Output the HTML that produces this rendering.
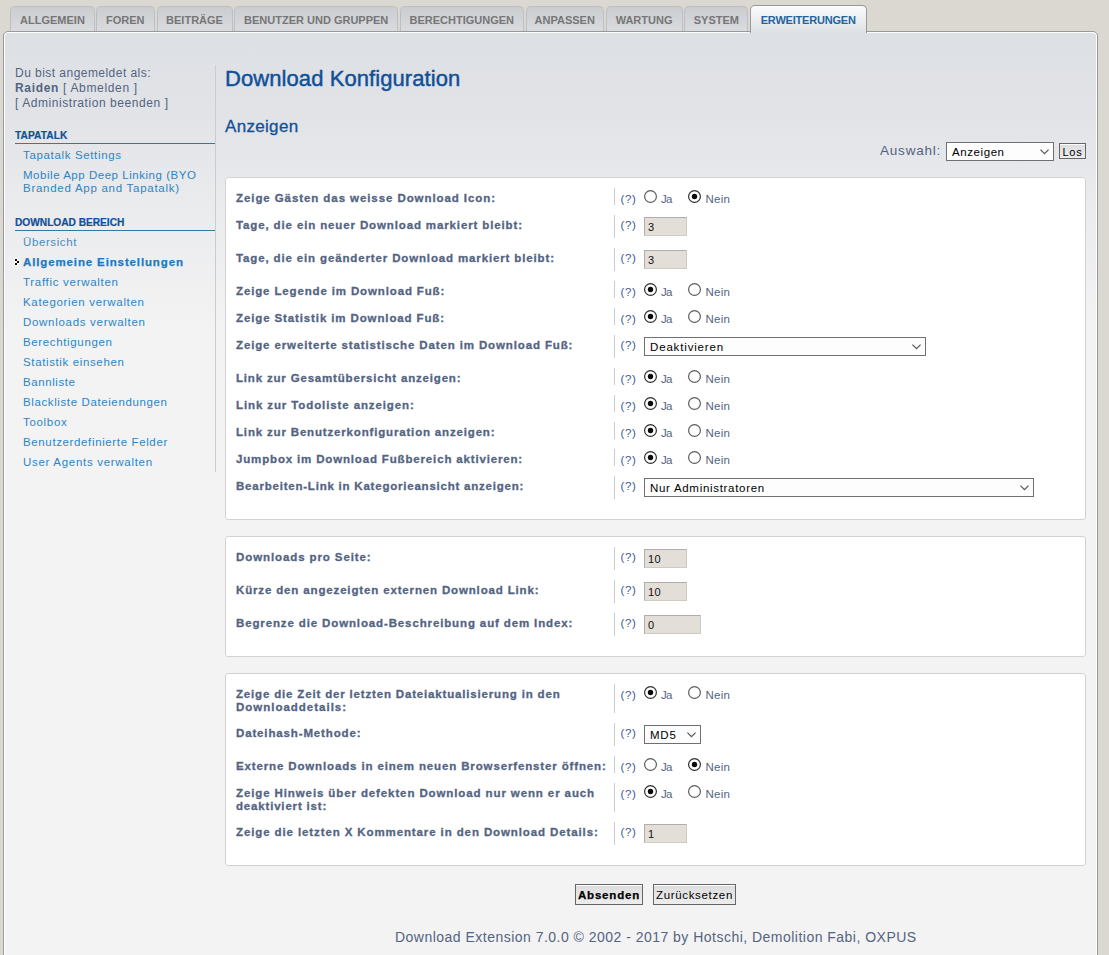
<!DOCTYPE html>
<html lang="de">
<head>
<meta charset="utf-8">
<title>Download Konfiguration</title>
<style>
html,body{margin:0;padding:0;width:1109px;height:955px;overflow:hidden}
#page{position:absolute;left:0;top:0;width:1109px;height:955px;overflow:hidden}
body{width:1109px;height:955px;overflow:hidden;background:#DBD7D1;font-family:"Liberation Sans",sans-serif;color:#536482;position:relative;font-size:12px}
*{box-sizing:border-box}
/* tabs */
#tabs{position:absolute;left:10px;top:0;height:34px;white-space:nowrap}
.tab{position:absolute;top:6px;height:26px;border:1px solid #BEBFC3;border-bottom:none;border-radius:5px 5px 0 0;background:linear-gradient(#CBCCD0,#DADCE0);color:#767676;font-weight:bold;font-size:11px;line-height:13px;padding:7px 0 0 0;text-align:center;text-transform:uppercase;z-index:3}
.tab.act{top:5px;height:28px;border-color:#999999;background:linear-gradient(#FCFCFC,#E9EBED 60%,#DEE1E5);color:#23649F;padding-top:8px;z-index:5;letter-spacing:-.2px}
/* acp */
#acp{position:absolute;left:3px;top:31px;width:1095px;height:960px;border:1px solid #999999;border-radius:5px;background:#fff;padding:1px;z-index:4}
#panel{width:100%;height:100%;border-radius:3px;background:#F3F3F3 linear-gradient(#DDE0E4 0px,#E1E3E7 80px,#EAEBED 170px,#F3F3F3 300px,#F3F3F3 100%)}
.abs{position:absolute;white-space:nowrap}
/* menu */
.mt{font-size:12px;letter-spacing:.4px;line-height:15px;color:#536482}
.mh{font-size:10.2px;font-weight:bold;color:#115098;line-height:12px;-webkit-text-stroke:.2px #115098}
.mline{position:absolute;left:15px;width:200px;height:1px;background:#327AA5}
.mi{position:absolute;left:23px;font-size:11.5px;letter-spacing:.42px;line-height:13px;color:#2E84C4;white-space:nowrap}
.mi.b{font-weight:bold;color:#1E78BE;-webkit-text-stroke:.25px #1E78BE}
.br{padding:0 1px}
h1{position:absolute;left:225px;top:64px;margin:0;font-size:22px;font-weight:normal;color:#115098;-webkit-text-stroke:.45px #115098;line-height:28px;white-space:nowrap}
h2{position:absolute;left:225px;top:116px;margin:0;font-size:17px;font-weight:normal;color:#115098;-webkit-text-stroke:.3px #115098;line-height:22px;letter-spacing:.15px;white-space:nowrap}
fieldset{position:absolute;left:225px;width:861px;margin:0;padding:0;border:1px solid #D2D2D2;border-radius:3px;background:#fff}
.row{position:absolute;left:0;width:100%}
.lbl{position:absolute;left:10px;top:0;font-weight:bold;font-size:11.5px;letter-spacing:.6px;line-height:13px;color:#536482;-webkit-text-stroke:.3px #536482;white-space:nowrap}
.dd{position:absolute;left:388px;top:0;width:1px;background:#CCCCCC}
.q{position:absolute;left:394.5px;font-size:11.5px;letter-spacing:.6px;color:#42568E;line-height:13px}
.radio{position:absolute;overflow:visible}
.rl{position:absolute;font-size:11.5px;line-height:13px;color:#536482}
.inp{position:absolute;left:418px;height:19px;background:#E3DFD8;border:1px solid;border-color:#AFAEAA #CFCBC3 #CFCBC3 #AFAEAA;font-size:11px;color:#111;line-height:19px;padding-left:3px;letter-spacing:.3px}
.sel{position:absolute;left:418px;height:19px;background:#FDFDFD;border:1px solid #707070;font-size:11.5px;color:#000;line-height:19px;padding-left:5px;letter-spacing:.55px;white-space:nowrap}
.sel svg{position:absolute;right:4.2px;top:6px}
.btn{position:absolute;height:21px;background:linear-gradient(#FFFFFF 0px,#FFFFFF 1px,#DEDEDE 1px,#EDEDED 100%);border:1px solid #666666;color:#000;font-size:12px;line-height:21px;text-align:center;white-space:nowrap}
</style>
</head>
<body>
<div id="page">
<div id="tabs">
<div class="tab" style="left:0.3px;width:84.4px">Allgemein</div>
<div class="tab" style="left:86.0px;width:58.5px">Foren</div>
<div class="tab" style="left:146.5px;width:76px">Beiträge</div>
<div class="tab" style="left:224.2px;width:164px">Benutzer und Gruppen</div>
<div class="tab" style="left:389.5px;width:124.5px">Berechtigungen</div>
<div class="tab" style="left:515.6px;width:78.2px">Anpassen</div>
<div class="tab" style="left:595.5px;width:77.1px">Wartung</div>
<div class="tab" style="left:674.3px;width:64.1px">System</div>
<div class="tab act" style="left:739.8px;width:116.8px">Erweiterungen</div>
</div>
<div id="acp"><div id="panel"></div></div>
<div id="content" style="position:absolute;left:0;top:0;width:1109px;height:955px;z-index:6">
<div class="abs mt" style="left:15px;top:66px"><span style="letter-spacing:0.46px">Du bist angemeldet als:</span></div>
<div class="abs mt" style="left:15px;top:81px"><span style="letter-spacing:0.67px"><b>Raiden</b> [ Abmelden ]</span></div>
<div class="abs mt" style="left:15px;top:96px"><span style="letter-spacing:0.57px">[ Administration beenden ]</span></div>
<div class="abs mh" style="left:15px;top:130px"><span style="letter-spacing:0.06px">TAPATALK</span></div>
<div class="mline" style="top:143px"></div>
<div class="mi" style="top:149px"><span style="letter-spacing:0.65px">Tapatalk Settings</span></div>
<div class="mi" style="top:169px"><span style="letter-spacing:0.53px">Mobile App Deep Linking (BYO</span><br><span style="letter-spacing:0.73px">Branded App and Tapatalk)</span></div>
<div class="abs mh" style="left:15px;top:217px"><span style="letter-spacing:-0.03px">DOWNLOAD BEREICH</span></div>
<div class="mline" style="top:230px"></div>
<div class="mi" style="top:236px;color:#4A8BC0"><span style="letter-spacing:0.60px">Übersicht</span></div>
<div class="mi b" style="top:256px"><span style="letter-spacing:0.87px">Allgemeine Einstellungen</span></div>
<div class="mi" style="top:276px"><span style="letter-spacing:0.70px">Traffic verwalten</span></div>
<div class="mi" style="top:296px"><span style="letter-spacing:0.68px">Kategorien verwalten</span></div>
<div class="mi" style="top:316px"><span style="letter-spacing:0.70px">Downloads verwalten</span></div>
<div class="mi" style="top:336px"><span style="letter-spacing:0.64px">Berechtigungen</span></div>
<div class="mi" style="top:356px"><span style="letter-spacing:0.63px">Statistik einsehen</span></div>
<div class="mi" style="top:376px"><span style="letter-spacing:0.57px">Bannliste</span></div>
<div class="mi" style="top:396px"><span style="letter-spacing:0.61px">Blackliste Dateiendungen</span></div>
<div class="mi" style="top:416px"><span style="letter-spacing:0.68px">Toolbox</span></div>
<div class="mi" style="top:436px"><span style="letter-spacing:0.63px">Benutzerdefinierte Felder</span></div>
<div class="mi" style="top:456px"><span style="letter-spacing:0.70px">User Agents verwalten</span></div>
<svg class="abs" style="left:14px;top:258px" width="6" height="8" viewBox="0 0 6 8" shape-rendering="crispEdges"><g fill="#fff" opacity=".75"><rect x="0" y="0" width="4" height="4"/><rect x="2" y="2" width="4" height="4"/><rect x="0" y="4" width="4" height="4"/></g><g fill="#0A0A0A"><rect x="1" y="1" width="2" height="2"/><rect x="3" y="3" width="2" height="2"/><rect x="1" y="5" width="2" height="2"/></g></svg>
<div class="abs" style="left:215px;top:65px;width:1px;height:407px;background:#C9CCD0"></div>

<h1 style="top:65px"><span style="letter-spacing:0.08px">Download Konfiguration</span></h1>
<h2><span style="letter-spacing:0.32px">Anzeigen</span></h2>
<div class="abs" style="left:880px;top:142.5px;font-size:13.5px;line-height:16px;color:#536482"><span style="letter-spacing:0.79px">Auswahl:</span></div>
<div class="sel" style="left:946px;top:142px;width:108px"><span style="letter-spacing:0.58px">Anzeigen</span><svg width="9" height="6" viewBox="0 0 9 6"><path d="M0.4 0.6 L4.5 4.7 L8.6 0.6" fill="none" stroke="#5A5A5A" stroke-width="1.3"/></svg></div>
<div class="btn" style="left:1059px;top:143px;width:27px;height:16px;line-height:16px;font-size:11px"><span style="letter-spacing:0.83px">Los</span></div>
<fieldset style="top:177px;height:343px">
<div class="row" style="top:10px;height:17px"><div class="lbl" style="top:4px"><span style="letter-spacing:0.92px">Zeige Gästen das weisse Download Icon:</span></div><div class="dd" style="height:17px"></div><span class="q" style="top:5px">(?)</span><svg class="radio" style="left:418px;top:2px" width="13" height="13" viewBox="0 0 13 13"><circle cx="6.5" cy="6.5" r="5.9" fill="#fff" stroke="#5C5C5C" stroke-width="1.2"/></svg><span class="rl" style="left:435px;top:5px"><span style="letter-spacing:-0.76px">Ja</span></span><svg class="radio" style="left:462px;top:2px" width="13" height="13" viewBox="0 0 13 13"><circle cx="6.5" cy="6.5" r="5.9" fill="#fff" stroke="#2E2E2E" stroke-width="1.2"/><circle cx="6.5" cy="6.5" r="2.7" fill="#0A0A0A"/></svg><span class="rl" style="left:479.5px;top:5px"><span style="letter-spacing:0.28px">Nein</span></span></div>
<div class="row" style="top:37px;height:23px"><div class="lbl" style="top:4px"><span style="letter-spacing:0.87px">Tage, die ein neuer Download markiert bleibt:</span></div><div class="dd" style="height:23px"></div><span class="q" style="top:4px">(?)</span><span class="inp" style="top:2px;width:43px">3</span></div>
<div class="row" style="top:70px;height:23px"><div class="lbl" style="top:4px"><span style="letter-spacing:0.86px">Tage, die ein geänderter Download markiert bleibt:</span></div><div class="dd" style="height:23px"></div><span class="q" style="top:4px">(?)</span><span class="inp" style="top:2px;width:43px">3</span></div>
<div class="row" style="top:103px;height:17px"><div class="lbl" style="top:4px"><span style="letter-spacing:0.86px">Zeige Legende im Download Fuß:</span></div><div class="dd" style="height:17px"></div><span class="q" style="top:5px">(?)</span><svg class="radio" style="left:418px;top:2px" width="13" height="13" viewBox="0 0 13 13"><circle cx="6.5" cy="6.5" r="5.9" fill="#fff" stroke="#2E2E2E" stroke-width="1.2"/><circle cx="6.5" cy="6.5" r="2.7" fill="#0A0A0A"/></svg><span class="rl" style="left:435px;top:5px"><span style="letter-spacing:-0.76px">Ja</span></span><svg class="radio" style="left:462px;top:2px" width="13" height="13" viewBox="0 0 13 13"><circle cx="6.5" cy="6.5" r="5.9" fill="#fff" stroke="#5C5C5C" stroke-width="1.2"/></svg><span class="rl" style="left:479.5px;top:5px"><span style="letter-spacing:0.28px">Nein</span></span></div>
<div class="row" style="top:130px;height:17px"><div class="lbl" style="top:4px"><span style="letter-spacing:0.88px">Zeige Statistik im Download Fuß:</span></div><div class="dd" style="height:17px"></div><span class="q" style="top:5px">(?)</span><svg class="radio" style="left:418px;top:2px" width="13" height="13" viewBox="0 0 13 13"><circle cx="6.5" cy="6.5" r="5.9" fill="#fff" stroke="#2E2E2E" stroke-width="1.2"/><circle cx="6.5" cy="6.5" r="2.7" fill="#0A0A0A"/></svg><span class="rl" style="left:435px;top:5px"><span style="letter-spacing:-0.76px">Ja</span></span><svg class="radio" style="left:462px;top:2px" width="13" height="13" viewBox="0 0 13 13"><circle cx="6.5" cy="6.5" r="5.9" fill="#fff" stroke="#5C5C5C" stroke-width="1.2"/></svg><span class="rl" style="left:479.5px;top:5px"><span style="letter-spacing:0.28px">Nein</span></span></div>
<div class="row" style="top:157px;height:23px"><div class="lbl" style="top:4px"><span style="letter-spacing:0.87px">Zeige erweiterte statistische Daten im Download Fuß:</span></div><div class="dd" style="height:23px"></div><span class="q" style="top:4px">(?)</span><span class="sel" style="top:2px;width:282px"><span style="letter-spacing:0.84px">Deaktivieren</span><svg width="9" height="6" viewBox="0 0 9 6"><path d="M0.4 0.6 L4.5 4.7 L8.6 0.6" fill="none" stroke="#5A5A5A" stroke-width="1.3"/></svg></span></div>
<div class="row" style="top:190px;height:17px"><div class="lbl" style="top:4px"><span style="letter-spacing:0.82px">Link zur Gesamtübersicht anzeigen:</span></div><div class="dd" style="height:17px"></div><span class="q" style="top:5px">(?)</span><svg class="radio" style="left:418px;top:2px" width="13" height="13" viewBox="0 0 13 13"><circle cx="6.5" cy="6.5" r="5.9" fill="#fff" stroke="#2E2E2E" stroke-width="1.2"/><circle cx="6.5" cy="6.5" r="2.7" fill="#0A0A0A"/></svg><span class="rl" style="left:435px;top:5px"><span style="letter-spacing:-0.76px">Ja</span></span><svg class="radio" style="left:462px;top:2px" width="13" height="13" viewBox="0 0 13 13"><circle cx="6.5" cy="6.5" r="5.9" fill="#fff" stroke="#5C5C5C" stroke-width="1.2"/></svg><span class="rl" style="left:479.5px;top:5px"><span style="letter-spacing:0.28px">Nein</span></span></div>
<div class="row" style="top:217px;height:17px"><div class="lbl" style="top:4px"><span style="letter-spacing:0.89px">Link zur Todoliste anzeigen:</span></div><div class="dd" style="height:17px"></div><span class="q" style="top:5px">(?)</span><svg class="radio" style="left:418px;top:2px" width="13" height="13" viewBox="0 0 13 13"><circle cx="6.5" cy="6.5" r="5.9" fill="#fff" stroke="#2E2E2E" stroke-width="1.2"/><circle cx="6.5" cy="6.5" r="2.7" fill="#0A0A0A"/></svg><span class="rl" style="left:435px;top:5px"><span style="letter-spacing:-0.76px">Ja</span></span><svg class="radio" style="left:462px;top:2px" width="13" height="13" viewBox="0 0 13 13"><circle cx="6.5" cy="6.5" r="5.9" fill="#fff" stroke="#5C5C5C" stroke-width="1.2"/></svg><span class="rl" style="left:479.5px;top:5px"><span style="letter-spacing:0.28px">Nein</span></span></div>
<div class="row" style="top:244px;height:17px"><div class="lbl" style="top:4px"><span style="letter-spacing:0.83px">Link zur Benutzerkonfiguration anzeigen:</span></div><div class="dd" style="height:17px"></div><span class="q" style="top:5px">(?)</span><svg class="radio" style="left:418px;top:2px" width="13" height="13" viewBox="0 0 13 13"><circle cx="6.5" cy="6.5" r="5.9" fill="#fff" stroke="#2E2E2E" stroke-width="1.2"/><circle cx="6.5" cy="6.5" r="2.7" fill="#0A0A0A"/></svg><span class="rl" style="left:435px;top:5px"><span style="letter-spacing:-0.76px">Ja</span></span><svg class="radio" style="left:462px;top:2px" width="13" height="13" viewBox="0 0 13 13"><circle cx="6.5" cy="6.5" r="5.9" fill="#fff" stroke="#5C5C5C" stroke-width="1.2"/></svg><span class="rl" style="left:479.5px;top:5px"><span style="letter-spacing:0.28px">Nein</span></span></div>
<div class="row" style="top:271px;height:17px"><div class="lbl" style="top:4px"><span style="letter-spacing:0.84px">Jumpbox im Download Fußbereich aktivieren:</span></div><div class="dd" style="height:17px"></div><span class="q" style="top:5px">(?)</span><svg class="radio" style="left:418px;top:2px" width="13" height="13" viewBox="0 0 13 13"><circle cx="6.5" cy="6.5" r="5.9" fill="#fff" stroke="#2E2E2E" stroke-width="1.2"/><circle cx="6.5" cy="6.5" r="2.7" fill="#0A0A0A"/></svg><span class="rl" style="left:435px;top:5px"><span style="letter-spacing:-0.76px">Ja</span></span><svg class="radio" style="left:462px;top:2px" width="13" height="13" viewBox="0 0 13 13"><circle cx="6.5" cy="6.5" r="5.9" fill="#fff" stroke="#5C5C5C" stroke-width="1.2"/></svg><span class="rl" style="left:479.5px;top:5px"><span style="letter-spacing:0.28px">Nein</span></span></div>
<div class="row" style="top:298px;height:23px"><div class="lbl" style="top:4px"><span style="letter-spacing:0.78px">Bearbeiten-Link in Kategorieansicht anzeigen:</span></div><div class="dd" style="height:23px"></div><span class="q" style="top:4px">(?)</span><span class="sel" style="top:2px;width:390px"><span style="letter-spacing:0.70px">Nur Administratoren</span><svg width="9" height="6" viewBox="0 0 9 6"><path d="M0.4 0.6 L4.5 4.7 L8.6 0.6" fill="none" stroke="#5A5A5A" stroke-width="1.3"/></svg></span></div>
</fieldset>
<fieldset style="top:536px;height:121px">
<div class="row" style="top:10px;height:23px"><div class="lbl" style="top:4px"><span style="letter-spacing:0.90px">Downloads pro Seite:</span></div><div class="dd" style="height:23px"></div><span class="q" style="top:4px">(?)</span><span class="inp" style="top:2px;width:43px">10</span></div>
<div class="row" style="top:43px;height:23px"><div class="lbl" style="top:4px"><span style="letter-spacing:0.85px">Kürze den angezeigten externen Download Link:</span></div><div class="dd" style="height:23px"></div><span class="q" style="top:4px">(?)</span><span class="inp" style="top:2px;width:43px">10</span></div>
<div class="row" style="top:76px;height:23px"><div class="lbl" style="top:4px"><span style="letter-spacing:0.87px">Begrenze die Download-Beschreibung auf dem Index:</span></div><div class="dd" style="height:23px"></div><span class="q" style="top:4px">(?)</span><span class="inp" style="top:2px;width:57px">0</span></div>
</fieldset>
<fieldset style="top:673px;height:193px">
<div class="row" style="top:10px;height:29px"><div class="lbl" style="top:4px"><span style="letter-spacing:0.83px">Zeige die Zeit der letzten Dateiaktualisierung in den</span><br><span style="letter-spacing:0.99px">Downloaddetails:</span></div><div class="dd" style="height:29px"></div><span class="q" style="top:5px">(?)</span><svg class="radio" style="left:418px;top:2px" width="13" height="13" viewBox="0 0 13 13"><circle cx="6.5" cy="6.5" r="5.9" fill="#fff" stroke="#2E2E2E" stroke-width="1.2"/><circle cx="6.5" cy="6.5" r="2.7" fill="#0A0A0A"/></svg><span class="rl" style="left:435px;top:5px"><span style="letter-spacing:-0.76px">Ja</span></span><svg class="radio" style="left:462px;top:2px" width="13" height="13" viewBox="0 0 13 13"><circle cx="6.5" cy="6.5" r="5.9" fill="#fff" stroke="#5C5C5C" stroke-width="1.2"/></svg><span class="rl" style="left:479.5px;top:5px"><span style="letter-spacing:0.28px">Nein</span></span></div>
<div class="row" style="top:49px;height:23px"><div class="lbl" style="top:4px"><span style="letter-spacing:0.86px">Dateihash-Methode:</span></div><div class="dd" style="height:23px"></div><span class="q" style="top:4px">(?)</span><span class="sel" style="top:2px;width:57px"><span style="letter-spacing:0.76px">MD5</span><svg width="9" height="6" viewBox="0 0 9 6"><path d="M0.4 0.6 L4.5 4.7 L8.6 0.6" fill="none" stroke="#5A5A5A" stroke-width="1.3"/></svg></span></div>
<div class="row" style="top:82px;height:17px"><div class="lbl" style="top:4px"><span style="letter-spacing:0.86px">Externe Downloads in einem neuen Browserfenster öffnen:</span></div><div class="dd" style="height:17px"></div><span class="q" style="top:5px">(?)</span><svg class="radio" style="left:418px;top:2px" width="13" height="13" viewBox="0 0 13 13"><circle cx="6.5" cy="6.5" r="5.9" fill="#fff" stroke="#5C5C5C" stroke-width="1.2"/></svg><span class="rl" style="left:435px;top:5px"><span style="letter-spacing:-0.76px">Ja</span></span><svg class="radio" style="left:462px;top:2px" width="13" height="13" viewBox="0 0 13 13"><circle cx="6.5" cy="6.5" r="5.9" fill="#fff" stroke="#2E2E2E" stroke-width="1.2"/><circle cx="6.5" cy="6.5" r="2.7" fill="#0A0A0A"/></svg><span class="rl" style="left:479.5px;top:5px"><span style="letter-spacing:0.28px">Nein</span></span></div>
<div class="row" style="top:109px;height:29px"><div class="lbl" style="top:4px"><span style="letter-spacing:0.89px">Zeige Hinweis über defekten Download nur wenn er auch</span><br><span style="letter-spacing:0.82px">deaktiviert ist:</span></div><div class="dd" style="height:29px"></div><span class="q" style="top:5px">(?)</span><svg class="radio" style="left:418px;top:2px" width="13" height="13" viewBox="0 0 13 13"><circle cx="6.5" cy="6.5" r="5.9" fill="#fff" stroke="#2E2E2E" stroke-width="1.2"/><circle cx="6.5" cy="6.5" r="2.7" fill="#0A0A0A"/></svg><span class="rl" style="left:435px;top:5px"><span style="letter-spacing:-0.76px">Ja</span></span><svg class="radio" style="left:462px;top:2px" width="13" height="13" viewBox="0 0 13 13"><circle cx="6.5" cy="6.5" r="5.9" fill="#fff" stroke="#5C5C5C" stroke-width="1.2"/></svg><span class="rl" style="left:479.5px;top:5px"><span style="letter-spacing:0.28px">Nein</span></span></div>
<div class="row" style="top:148px;height:23px"><div class="lbl" style="top:4px"><span style="letter-spacing:0.89px">Zeige die letzten X Kommentare in den Download Details:</span></div><div class="dd" style="height:23px"></div><span class="q" style="top:4px">(?)</span><span class="inp" style="top:2px;width:43px">1</span></div>
</fieldset>
<div class="btn" style="left:575px;top:884px;width:68px;font-weight:bold;font-size:11.5px;-webkit-text-stroke:.25px #000"><span style="letter-spacing:0.82px">Absenden</span></div>
<div class="btn" style="left:653px;top:884px;width:83px;font-size:11.5px"><span style="letter-spacing:0.66px">Zurücksetzen</span></div>
<div class="abs" style="left:395px;top:928.6px;font-size:14px;line-height:16px;color:#536482"><span style="letter-spacing:0.48px">Download Extension 7.0.0 © 2002 - 2017 by Hotschi, Demolition Fabi, OXPUS</span></div>

</div>
</div>
</body>
</html>
